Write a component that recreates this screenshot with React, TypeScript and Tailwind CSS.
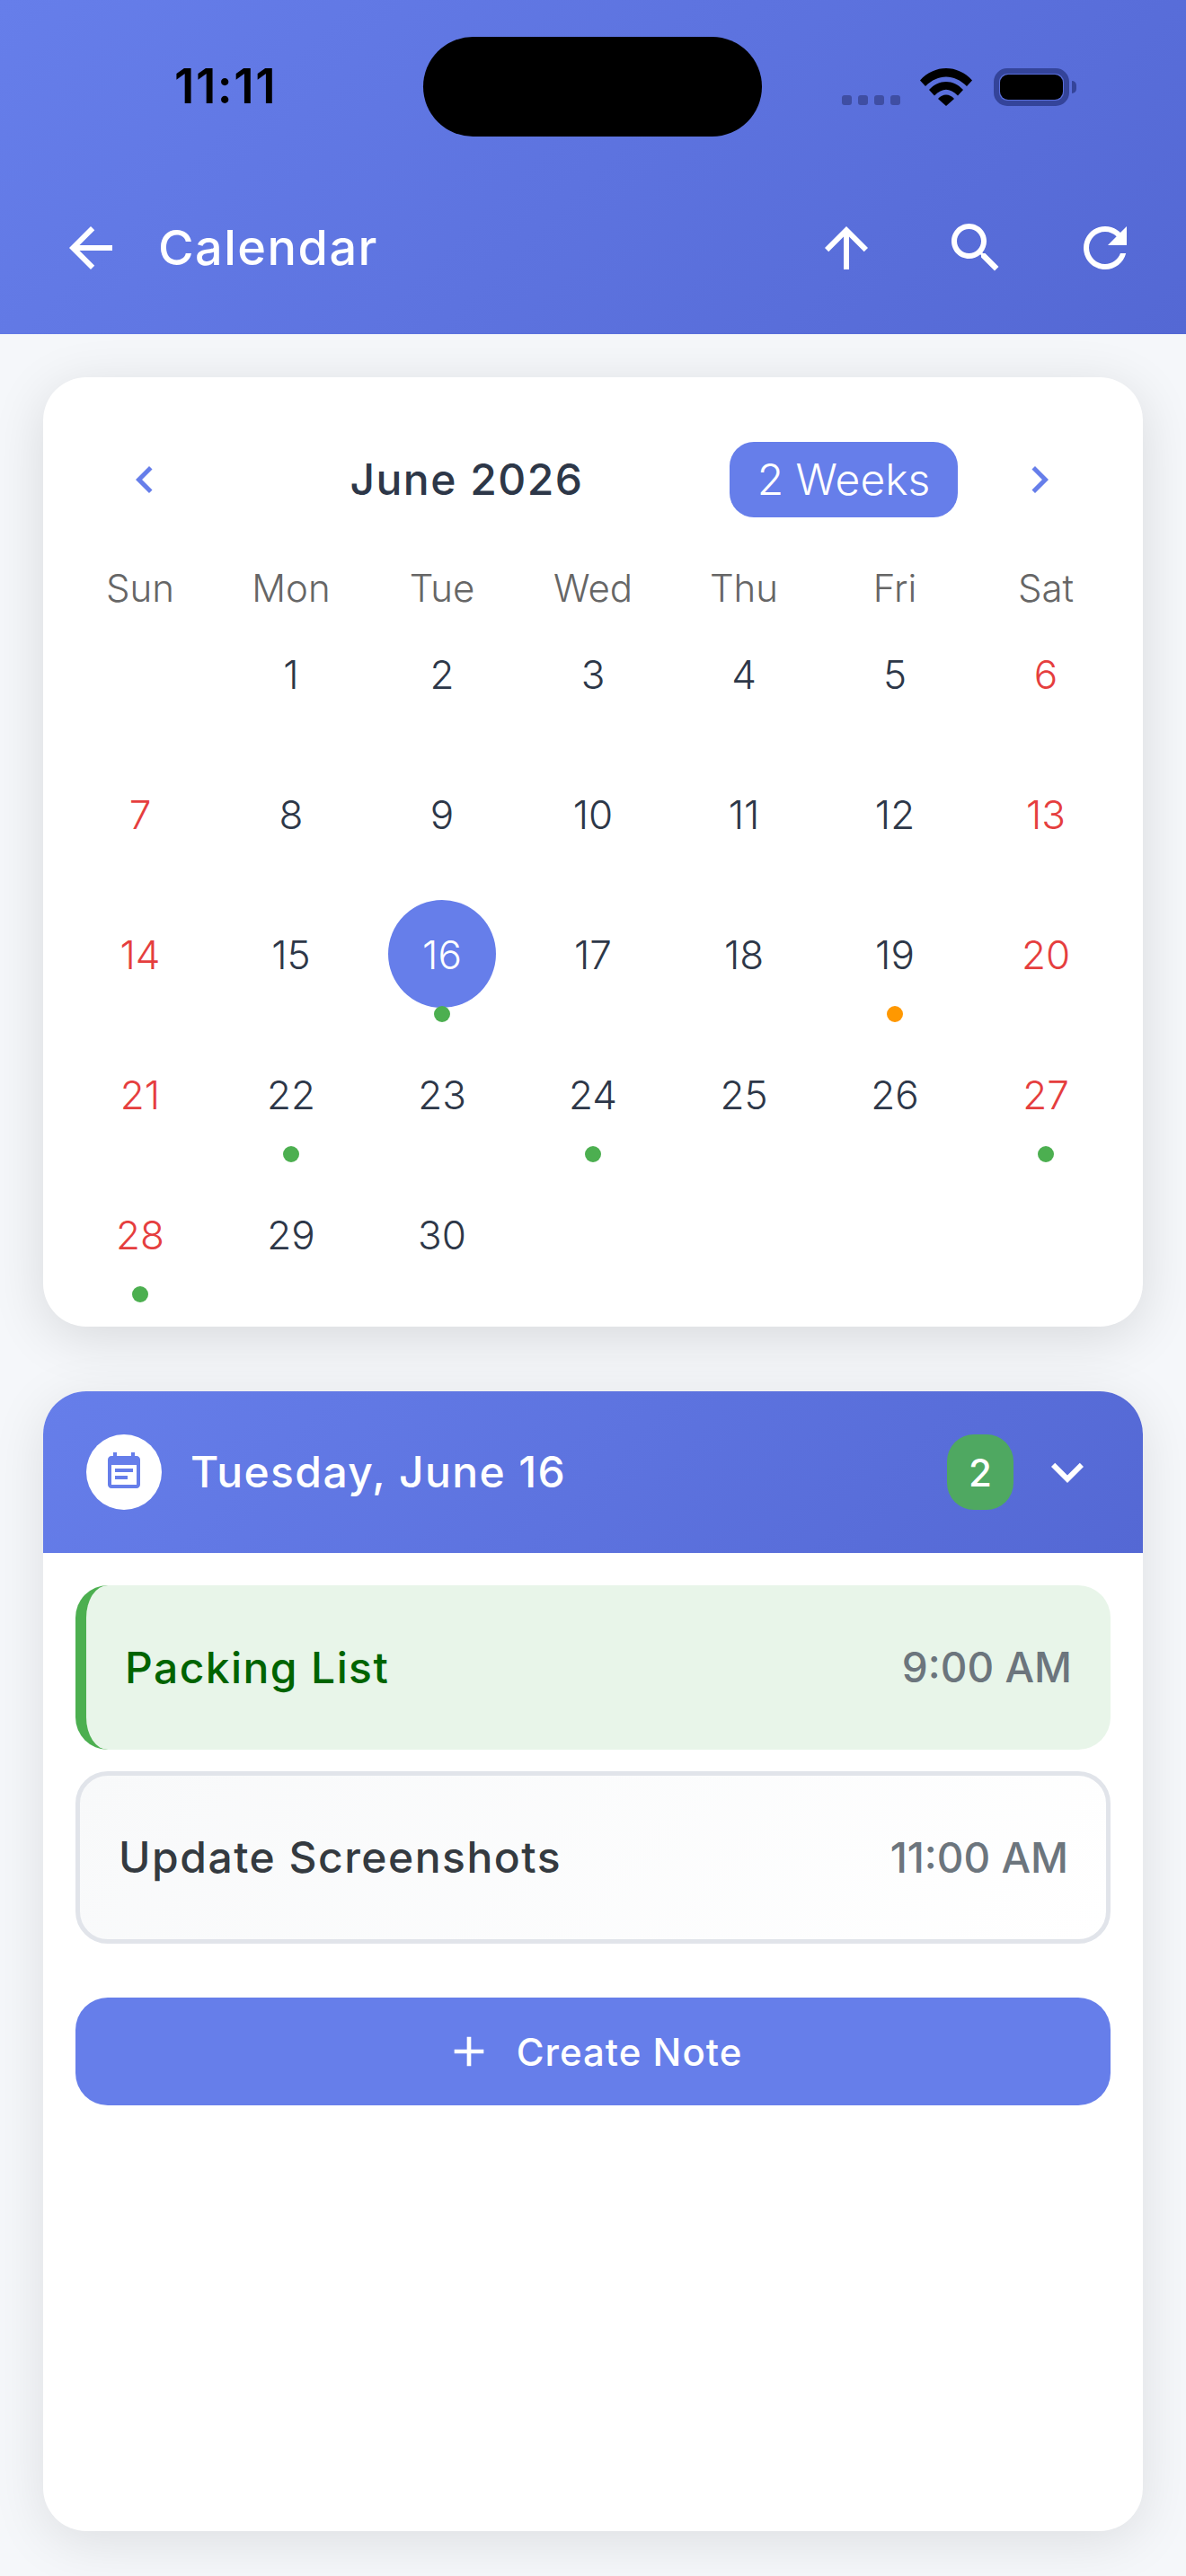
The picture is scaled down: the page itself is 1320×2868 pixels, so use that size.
const PRIMARY = "#667eea";

const weekdays = ["Sun", "Mon", "Tue", "Wed", "Thu", "Fri", "Sat"];

// null = blank cell before the 1st
const days: (number | null)[] = [null, ...Array.from({ length: 30 }, (_, i) => i + 1)];

const dots: Record<number, string> = {
  16: "bg-[#4caf50]",
  19: "bg-[#ff9800]",
  22: "bg-[#4caf50]",
  24: "bg-[#4caf50]",
  27: "bg-[#4caf50]",
  28: "bg-[#4caf50]",
};

function MaterialIcon({ d, size = 72, color = "#fff" }: { d: string; size?: number; color?: string }) {
  return (
    <svg width={size} height={size} viewBox="0 0 24 24" fill={color} className="shrink-0">
      <path d={d} />
    </svg>
  );
}

const icons = {
  back: "M20 11H7.83l5.59-5.59L12 4l-8 8 8 8 1.41-1.41L7.83 13H20v-2z",
  up: "M4 12l1.41 1.41L11 7.83V20h2V7.83l5.58 5.59L20 12l-8-8-8 8z",
  search:
    "M15.5 14h-.79l-.28-.27C15.41 12.59 16 11.11 16 9.5 16 5.91 13.09 3 9.5 3S3 5.91 3 9.5 5.91 16 9.5 16c1.61 0 3.09-.59 4.23-1.57l.27.28v.79l5 4.99L20.49 19l-4.99-5zm-6 0C7.01 14 5 11.99 5 9.5S7.01 5 9.5 5 14 7.01 14 9.5 11.99 14 9.5 14z",
  refresh:
    "M17.65 6.35C16.2 4.9 14.21 4 12 4c-4.42 0-7.99 3.58-7.99 8s3.57 8 7.99 8c3.73 0 6.84-2.55 7.73-6h-2.08c-.82 2.33-3.04 4-5.65 4-3.31 0-6-2.69-6-6s2.69-6 6-6c1.66 0 3.14.69 4.22 1.78L13 11h7V4l-2.35 2.35z",
  left: "M15.41 7.41L14 6l-6 6 6 6 1.41-1.41L10.83 12z",
  right: "M10 6L8.59 7.41 13.17 12l-4.58 4.59L10 18l6-6z",
  down: "M7.41 8.59L12 13.17l4.59-4.58L18 10l-6 6-6-6 1.41-1.41z",
  event:
    "M17 10H7v2h10v-2zm2-7h-1V1h-2v2H8V1H6v2H5c-1.11 0-1.99.9-1.99 2L3 19c0 1.1.89 2 2 2h14c1.1 0 2-.9 2-2V5c0-1.1-.9-2-2-2zm0 16H5V8h14v11zm-5-5H7v2h7v-2z",
  plus: "M19 13h-6v6h-2v-6H5v-2h6V5h2v6h6v2z",
};

function StatusBar() {
  return (
    <div className="flex h-[111px] items-center pl-[194px]">
      <span className="w-[277px] text-[53px] leading-none font-semibold tracking-[1.5px] text-black">11:11</span>
      <div className="h-[111px] w-[377px] rounded-full bg-black" />
      <div className="ml-[89px] flex gap-[7px] self-start pt-[65px]">
        {[0, 1, 2, 3].map((i) => (
          <span key={i} className="size-[11px] rounded-[3px] bg-[#3f4ea3]" />
        ))}
      </div>
      <svg width="58" height="42" viewBox="0 0 58 42" className="ml-[22px] shrink-0">
        <path d="M0 13.500 C16 -4.500 42 -4.500 58 13.500 L52 20 C38 6 20 6 6 20 Z" fill="#000" />
        <path d="M10 24 C21 12 37 12 48 24 L42 30.500 C33 21.500 25 21.500 16 30.500 Z" fill="#000" />
        <path d="M20 34 C25 28 33 28 38 34 L29 42 Z" fill="#000" />
      </svg>
      <div className="ml-[24px] flex items-center">
        <div className="h-[42px] w-[84px] rounded-[15px] border-[6px] border-[#34449a] p-px">
          <div className="h-full w-full rounded-[9px] bg-black" />
        </div>
        <div className="ml-[3px] h-[14px] w-[5px] rounded-r-full bg-[#34449a]" />
      </div>
    </div>
  );
}

function Header() {
  return (
    <header className="h-[372px] bg-[linear-gradient(135deg,#667eea,#5468d4)] pt-[41px]">
      <StatusBar />
      <div className="mt-[88px] flex h-[72px] items-center pl-[65px] pr-[54px]">
        <MaterialIcon d={icons.back} />
        <h1 className="ml-[39px] flex-1 text-[54px] leading-none font-medium tracking-[1.5px] text-white">Calendar</h1>
        <div className="flex gap-[72px]">
          <MaterialIcon d={icons.up} />
          <MaterialIcon d={icons.search} />
          <MaterialIcon d={icons.refresh} />
        </div>
      </div>
    </header>
  );
}

function DayCell({ day, index }: { day: number | null; index: number }) {
  if (day === null) return <div className="h-[156px]" />;
  const weekend = index % 7 === 0 || index % 7 === 6;
  const selected = day === 16;
  return (
    <div className="relative flex h-[156px] justify-center">
      <div
        className={`flex size-[120px] items-center justify-center rounded-full pt-[2px] text-[44px] font-[350] ${
          selected ? "bg-[#667eea] text-white" : weekend ? "text-[#e53e3e]" : "text-[#2d3748]"
        }`}
      >
        {day}
      </div>
      {dots[day] && <span className={`absolute top-[118px] size-[18px] rounded-full ${dots[day]}`} />}
    </div>
  );
}

function CalendarCard() {
  return (
    <section className="rounded-[48px] bg-white px-[24px] pt-[72px] pb-[7px] shadow-[0_12px_60px_rgba(0,0,0,0.12)]">
      <div className="flex h-[84px] items-center pl-[59px] pr-[61px]">
        <MaterialIcon d={icons.left} size={60} color={PRIMARY} />
        <h2 className="flex-1 pl-[36px] text-center text-[48px] leading-none font-[550] tracking-[1.5px] text-[#2d3748]">
          June 2026
        </h2>
        <button className="flex h-[84px] w-[254px] items-center justify-center rounded-[27px] bg-[#667eea] text-[48px] font-light text-white">
          2 Weeks
        </button>
        <div className="ml-[61px]">
          <MaterialIcon d={icons.right} size={60} color={PRIMARY} />
        </div>
      </div>
      <div className="mt-[55px] grid h-[48px] grid-cols-7 items-center text-center text-[42px] leading-none font-[350] text-[#666]">
        {weekdays.map((w) => (
          <span key={w}>{w}</span>
        ))}
      </div>
      <div className="mt-[11px] grid grid-cols-7">
        {days.map((d, i) => (
          <DayCell key={i} day={d} index={i} />
        ))}
      </div>
    </section>
  );
}

function DayPanel() {
  return (
    <section className="mt-[72px] flex h-[1269px] flex-col overflow-hidden rounded-[48px] bg-white shadow-[0_12px_60px_rgba(0,0,0,0.1)]">
      <div className="flex h-[180px] items-center bg-[linear-gradient(135deg,#667eea,#5468d4)] px-[48px]">
        <div className="flex size-[84px] items-center justify-center rounded-full bg-white">
          <MaterialIcon d={icons.event} size={48} color={PRIMARY} />
        </div>
        <h3 className="ml-[32px] flex-1 text-[48px] leading-none font-medium tracking-[1.4px] text-white">
          Tuesday, June 16
        </h3>
        <span className="flex h-[84px] w-[74px] items-center justify-center rounded-[30px] bg-[#4fa861] text-[42px] font-medium text-white">
          2
        </span>
        <div className="ml-[24px]">
          <MaterialIcon d={icons.down} />
        </div>
      </div>
      <div className="flex flex-col px-[36px] pt-[36px]">
        <div className="flex h-[183px] items-center justify-between rounded-[36px] border-l-[12px] border-[#4caf50] bg-[#e8f5e9] pl-[43px] pr-[43px]">
          <span className="text-[48px] font-[550] tracking-[1.4px] text-[#006400]">Packing List</span>
          <span className="text-[46px] font-medium text-[#6c757d]">9:00 AM</span>
        </div>
        <div className="mt-[24px] flex h-[192px] items-center justify-between rounded-[36px] border-[5px] border-[#e1e4ea] bg-[linear-gradient(135deg,#f8f9fa,#ffffff)] pl-[43px] pr-[42px]">
          <span className="text-[48px] font-[550] tracking-[1.5px] text-[#343a40]">Update Screenshots</span>
          <span className="text-[46px] font-medium text-[#6c757d]">11:00 AM</span>
        </div>
        <button className="mt-[60px] flex h-[120px] items-center justify-center rounded-[36px] bg-[#667eea] text-[42px] font-medium tracking-[1px] text-white">
          <MaterialIcon d={icons.plus} size={56} />
          <span className="ml-[25px]">Create Note</span>
        </button>
      </div>
    </section>
  );
}

export default function App() {
  return (
    <div className="h-[2868px] w-[1320px] overflow-hidden bg-[#f5f7fa] font-['Inter',sans-serif]">
      <Header />
      <main className="px-[48px] pt-[48px]">
        <CalendarCard />
        <DayPanel />
      </main>
    </div>
  );
}
